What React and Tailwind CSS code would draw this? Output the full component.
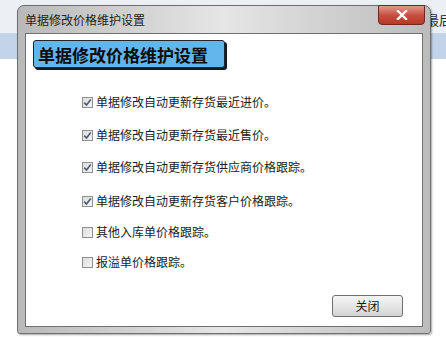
import React from "react";

function Check({ checked }) {
  return (
    <div className="w-[11px] h-[11px] border border-[#8e8f8f] bg-gradient-to-br from-[#dcdcdc] to-[#f6f6f6] flex items-center justify-center shrink-0">
      {checked && (
        <svg width="9" height="9" viewBox="0 0 9 9">
          <path d="M1.2 4.6 L3.5 7 L7.8 1.4" fill="none" stroke="#4a5b73" strokeWidth="1.6" />
        </svg>
      )}
    </div>
  );
}

function Row({ text, checked, cls }) {
  return (
    <div className={"flex items-center h-[20px] gap-[3px] " + cls}>
      <Check checked={checked} />
      <span className="text-[12px] leading-none text-[#1c1c1c] whitespace-nowrap">{text}</span>
    </div>
  );
}

export default function App() {
  return (
    <div className="relative w-[446px] h-[337px] overflow-hidden bg-white font-['Noto_Sans_CJK_SC',sans-serif]">
      <div className="h-[33px] bg-[#eceff3] flex justify-end items-start pt-[13px]">
        <span className="text-[13px] text-[#2a2a2a] leading-none w-[20px] whitespace-nowrap">最后</span>
      </div>
      <div className="h-[26px] bg-[#c3d4e8]" />
      <div className="absolute left-[17px] top-[5px] w-[414px] h-[329px] rounded-t-[7px] rounded-b-[3px] border border-[#6f6f6f] bg-gradient-to-r from-[#b9b9b9] via-[#e6e6e6] to-[#bcbcbc] flex flex-col shadow-[1px_1px_2px_rgba(0,0,0,0.35)]">
        <div className="h-[27px] flex items-center pl-[7px] relative">
          <span className="text-[12px] text-[#1e1e1e] leading-none mt-[1px]">单据修改价格维护设置</span>
          <div className="absolute right-[5px] top-[-1px] w-[47px] h-[20px] rounded-b-[4px] border border-[#6b2a22] bg-gradient-to-b from-[#e0998e] via-[#c8503f] to-[#b53a26] flex items-center justify-center">
            <svg width="12" height="10" viewBox="0 0 12 10">
              <path d="M2 1 L10 9 M10 1 L2 9" stroke="#ffffff" strokeWidth="2.4" strokeLinecap="square" />
            </svg>
          </div>
        </div>
        <div className="mx-[7px] mb-[6px] flex-1 bg-white border border-[#707070] flex flex-col">
          <div className="ml-[7px] mt-[6px] w-[192px] h-[28px] bg-[#63b6e9] border border-[#1d2733] rounded-[3px] shadow-[2px_2px_0_#141a22] flex items-center pl-[4px]">
            <span className="text-[17px] font-bold leading-none text-[#0c0c0c]">单据修改价格维护设置</span>
          </div>
          <div className="pl-[56px] flex flex-col">
            <Row text="单据修改自动更新存货最近进价。" checked cls="mt-[24px]" />
            <Row text="单据修改自动更新存货最近售价。" checked cls="mt-[13px]" />
            <Row text="单据修改自动更新存货供应商价格跟踪。" checked cls="mt-[12px]" />
            <Row text="单据修改自动更新存货客户价格跟踪。" checked cls="mt-[14px]" />
            <Row text="其他入库单价格跟踪。" checked={false} cls="mt-[11px]" />
            <Row text="报溢单价格跟踪。" checked={false} cls="mt-[10px]" />
          </div>
          <div className="mt-auto mb-[9px] self-end mr-[19px] w-[71px] h-[22px] rounded-[3px] border border-[#707070] bg-gradient-to-b from-[#f4f4f4] via-[#e6e6e6] to-[#d4d4d4] flex items-center justify-center">
            <span className="text-[12px] leading-none text-[#1a1a1a]">关闭</span>
          </div>
        </div>
      </div>
    </div>
  );
}
